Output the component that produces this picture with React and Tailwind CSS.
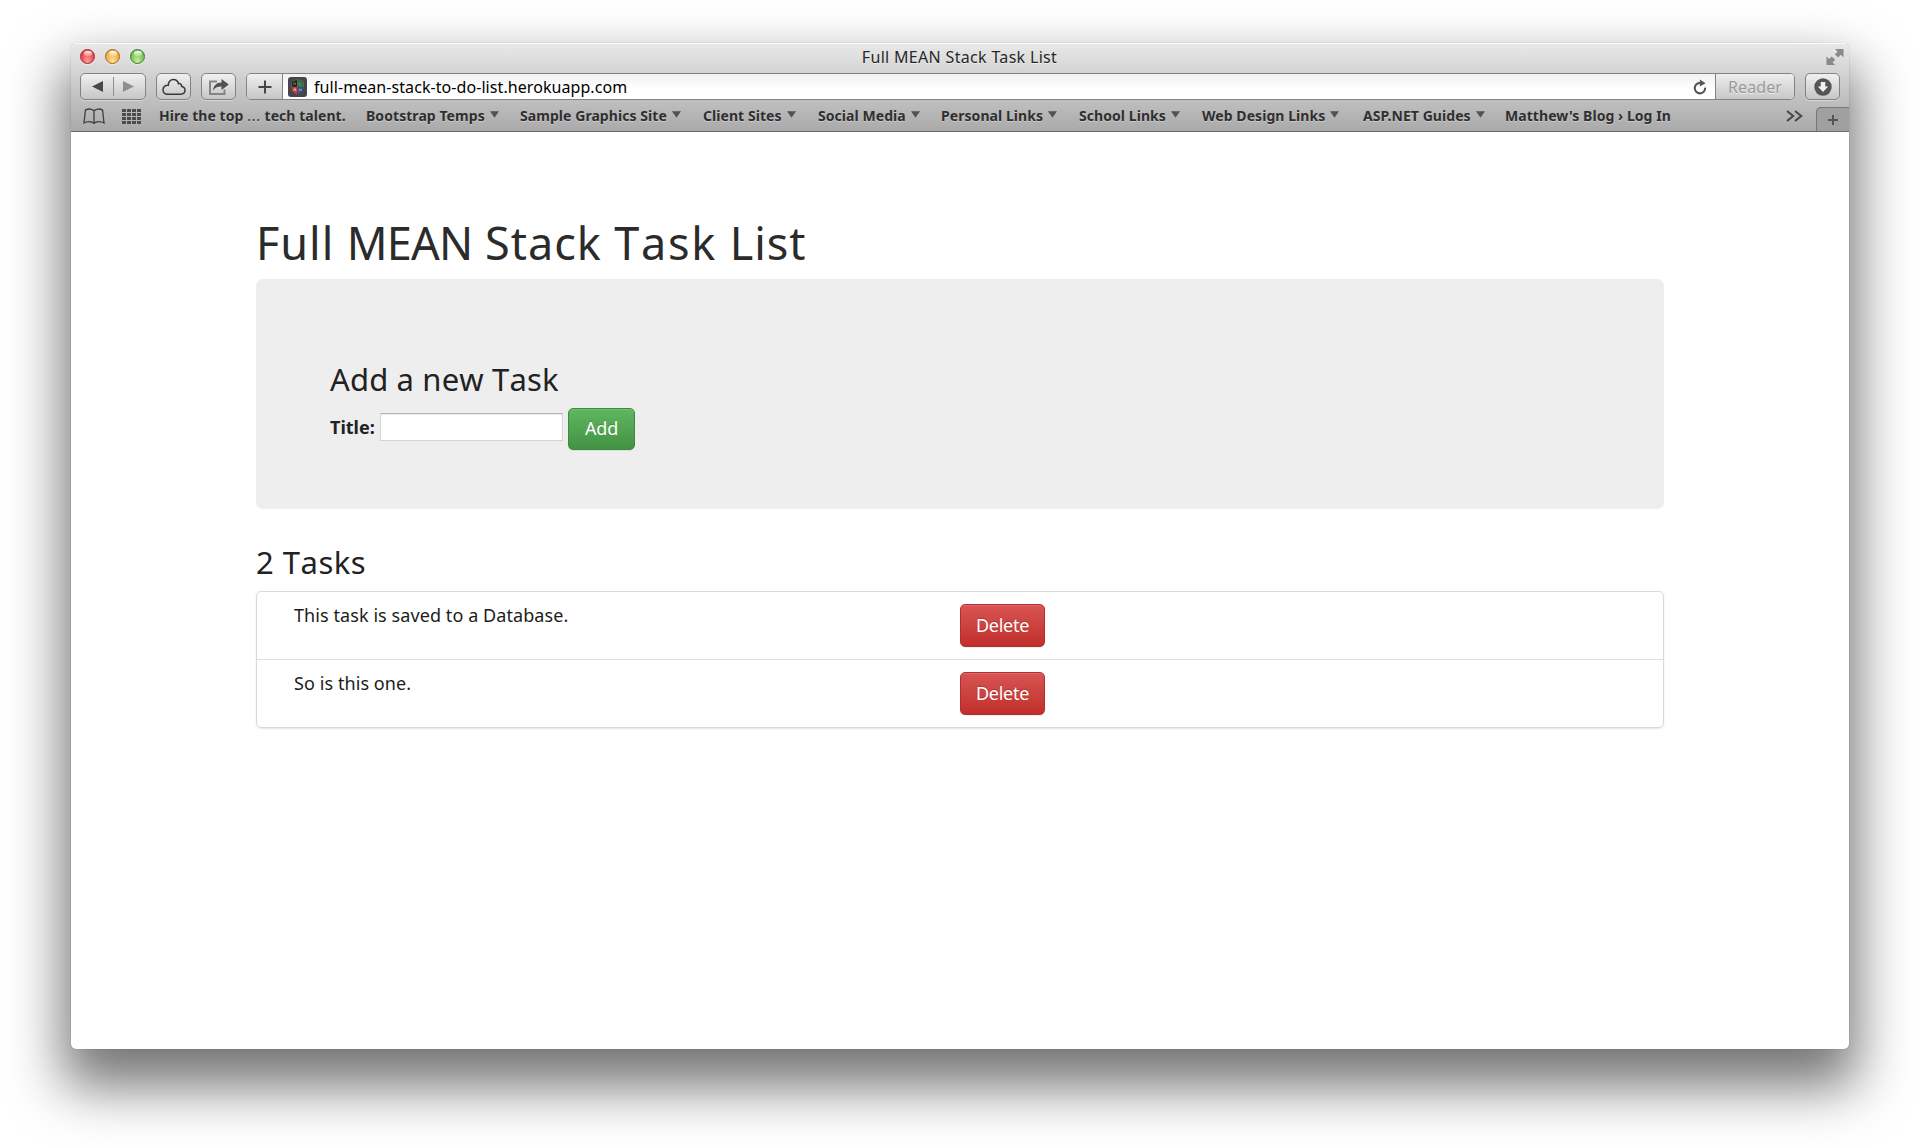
import React from "react";

const BOOKMARKS = [
  { label: "Bootstrap Temps", box: "w-[154px]", menu: true },
  { label: "Sample Graphics Site", box: "w-[183px]", menu: true },
  { label: "Client Sites", box: "w-[115px]", menu: true },
  { label: "Social Media", box: "w-[123px]", menu: true },
  { label: "Personal Links", box: "w-[138px]", menu: true },
  { label: "School Links", box: "w-[123px]", menu: true },
  { label: "Web Design Links", box: "w-[161px]", menu: true },
  { label: "ASP.NET Guides", box: "w-[142px]", menu: true },
  { label: "Matthew's Blog › Log In", box: "w-[166px]", menu: false },
];

const TASKS = ["This task is saved to a Database.", "So is this one."];

function ToolButton({ className, children }) {
  return (
    <div
      className={
        "flex h-[27px] items-center justify-center rounded-[5px] border border-[#838383] bg-linear-to-b from-[#f0f0f0] to-[#c6c6c6] shadow-[0_1px_0_rgba(255,255,255,0.35)] " +
        className
      }
    >
      {children}
    </div>
  );
}

function Light({ className }) {
  return (
    <div
      className={
        "flex h-[15px] w-[15px] justify-center rounded-full border shadow-[0_1px_0_rgba(255,255,255,0.5)] " +
        className
      }
    >
      <div className="mt-px h-[5px] w-[8px] rounded-full bg-linear-to-b from-white/90 to-white/20" />
    </div>
  );
}

function CloudIcon() {
  return (
    <svg width="24" height="18" viewBox="0 0 24 18" fill="none" stroke="#383838" strokeWidth="1.5">
      <path d="M5.3 16.2 H18.6 C21.3 16.2 23 14.5 23 12.3 C23 10 21.4 8.6 19.6 8.4 C19.9 6.6 18.4 5.2 16.5 5.7 C15.8 3.1 13.9 1.6 11.4 1.6 C8.3 1.6 6.2 4 6.3 7.3 C3.2 7 1 9 1 11.7 C1 14.3 2.8 16.2 5.3 16.2 Z" />
    </svg>
  );
}

function ShareIcon() {
  return (
    <svg width="22" height="18" viewBox="0 0 22 18">
      <path d="M9 3.5 H2 V16 H16.5 V11.5" fill="none" stroke="#858585" strokeWidth="2" />
      <path d="M5 12.5 C5.5 7.5 8.5 4.6 13.5 4.5 V1 L20.8 6.6 L13.5 12 V8.6 C10 8.5 7.5 9.3 5 12.5 Z" fill="#505050" />
    </svg>
  );
}

function SiteIcon() {
  return (
    <svg width="19" height="20" viewBox="0 0 19 20">
      <rect width="19" height="20" rx="3" fill="#46464a" />
      <path d="M9.5 2.5 L3.5 4.4 V10 H9.5 Z" fill="#1c1c1c" stroke="#70706f" strokeWidth="0.6" />
      <path d="M9.5 2.5 L15.5 4.4 V10 H9.5 Z" fill="#2f6d3d" stroke="#70706f" strokeWidth="0.6" />
      <path d="M3.5 10 H9.5 V18 C5.5 16 3.7 14 3.5 10 Z" fill="#c63a35" />
      <path d="M15.5 10 H9.5 V18 C13.5 16 15.3 14 15.5 10 Z" fill="#33507e" />
      <path d="M5.2 8 L6.5 5.2 L7.8 8 M11.2 5.2 V8 H13.6 M11.2 6.6 H13.2" fill="none" stroke="#55a05e" strokeWidth="0.9" />
      <path d="M5.5 14 L6.8 11.4 L8.2 14" fill="none" stroke="#f0c4c0" strokeWidth="0.9" />
      <path d="M11.3 14.2 V11.8 L13.3 14 V11.6" fill="none" stroke="#7da4d0" strokeWidth="0.9" />
    </svg>
  );
}

function BookIcon() {
  return (
    <svg width="22" height="17" viewBox="0 0 22 17" fill="none" stroke="#3e3e3e" strokeWidth="1.3">
      <path d="M11 2.8 C8.8 0.6 5 0.5 2.4 2.1 L1 15 C4.2 13 8.5 13 11 15.4 C13.5 13 17.8 13 21 15 L19.6 2.1 C17 0.5 13.2 0.6 11 2.8 Z M11 2.8 V15" />
    </svg>
  );
}

function GridIcon() {
  return (
    <div className="grid grid-cols-4 gap-x-px gap-y-px">
      {Array.from({ length: 16 }, (_, i) => (
        <div key={i} className="h-[3px] w-[4px] bg-[#4c4c4c]" />
      ))}
    </div>
  );
}

function Titlebar() {
  return (
    <div className="grid h-[30px] grid-cols-[1fr_auto_1fr] items-start pl-[9px] pr-[5px]">
      <div className="flex gap-[10px] pt-[6px]">
        <Light className="border-[#a3282c] bg-radial-[at_50%_85%] from-[#ff9c98] to-[#d9272f]" />
        <Light className="border-[#a8651f] bg-radial-[at_50%_85%] from-[#ffe38f] to-[#e8952a]" />
        <Light className="border-[#3f7f2c] bg-radial-[at_50%_85%] from-[#c4f09a] to-[#58a93c]" />
      </div>
      <div className="-ml-[5px] text-[16px] leading-[29px] tracking-[0.32px] text-[#272727] [text-shadow:0_1px_0_rgba(255,255,255,0.5)]">
        Full MEAN Stack Task List
      </div>
      <div className="flex justify-end pt-[5px]">
        <svg width="18" height="18" viewBox="0 0 19 19" fill="#8a8a8a">
          <path d="M9.5 1 H18.5 V10 L15.6 7.1 L12.8 9.9 L9.3 6.6 L12.2 3.9 Z" />
          <path d="M0.5 9 L3.3 11.6 L6 9 L9.7 12.4 L6.9 15.2 L9.7 18 H0.5 Z" />
        </svg>
      </div>
    </div>
  );
}

function Toolbar() {
  return (
    <div className="flex h-[27px] px-[9px]">
      <ToolButton className="w-[66px]">
        <svg width="64" height="25" viewBox="0 0 64 25">
          <path d="M22 7 V18 L11 12.5 Z" fill="#484848" />
          <path d="M32.5 3 V22" stroke="#8f8f8f" />
          <path d="M42 7 V18 L53 12.5 Z" fill="#8f8f8f" />
        </svg>
      </ToolButton>
      <ToolButton className="ml-[10px] w-[35px]">
        <CloudIcon />
      </ToolButton>
      <ToolButton className="ml-[10px] w-[35px]">
        <ShareIcon />
      </ToolButton>
      <div className="ml-[10px] flex h-[27px] flex-1 overflow-hidden rounded-[5px] border border-[#838383] bg-linear-to-b from-[#f1f1f1] to-white to-60%">
        <div className="flex w-[36px] items-center justify-center border-r border-[#838383] bg-linear-to-b from-[#f0f0f0] to-[#c6c6c6]">
          <svg width="14" height="14" viewBox="0 0 14 14" stroke="#454545" strokeWidth="2">
            <path d="M7 0.5 V13.5 M0.5 7 H13.5" />
          </svg>
        </div>
        <div className="flex items-center pl-[5px]">
          <SiteIcon />
        </div>
        <div className="pl-[7px] text-[16px] leading-[27px] tracking-[0.07px] text-black">
          full-mean-stack-to-do-list.herokuapp.com
        </div>
        <div className="ml-auto flex items-center pr-[8px]">
          <svg width="14" height="16" viewBox="0 0 14 16">
            <path d="M12.1 8.6 A5.2 5.2 0 1 1 7.6 4" fill="none" stroke="#555" strokeWidth="2.1" />
            <path d="M6.8 0.6 L12.6 4.2 L6.8 7.6 Z" fill="#555" />
          </svg>
        </div>
        <div className="w-[79px] border-l border-[#838383] bg-linear-to-b from-[#eeeeee] to-[#c8c8c8] text-center text-[16px] leading-[27px] tracking-[0.1px] text-[#9a9a9a] [text-shadow:0_1px_0_rgba(255,255,255,0.6)]">
          Reader
        </div>
      </div>
      <ToolButton className="ml-[10px] w-[35px]">
        <svg width="18" height="18" viewBox="0 0 18 18">
          <circle cx="9" cy="9" r="8.7" fill="#555" />
          <path d="M6.7 4 H11.3 V8.6 H14.2 L9 14 L3.8 8.6 H6.7 Z" fill="#f2f2f2" />
        </svg>
      </ToolButton>
    </div>
  );
}

function BookmarkText({ children }) {
  return (
    <span className="whitespace-nowrap text-[14px] font-bold leading-[31px] tracking-[0.06px] text-[#2f2f2f] [text-shadow:0_1px_0_rgba(255,255,255,0.35)]">
      {children}
    </span>
  );
}

function BookmarksBar() {
  return (
    <div className="flex h-[32px] items-stretch border-b border-[#6a6a6a] pl-[12px]">
      <div className="flex w-[39px] items-center pt-px">
        <BookIcon />
      </div>
      <div className="flex w-[37px] items-center pt-px">
        <GridIcon />
      </div>
      <div className="flex w-[207px] shrink-0 items-center">
        <BookmarkText>
          Hire the top <span className="font-normal tracking-[0.8px]">...</span> tech talent.
        </BookmarkText>
      </div>
      {BOOKMARKS.map((b) => (
        <div key={b.label} className={"flex shrink-0 items-center " + b.box}>
          <BookmarkText>{b.label}</BookmarkText>
          {b.menu && (
            <svg width="9" height="7" viewBox="0 0 9 7" className="mb-[2px] ml-[5px] shrink-0">
              <path d="M0 0.3 H9 L4.5 6.8 Z" fill="#525252" />
            </svg>
          )}
        </div>
      ))}
      <div className="ml-auto flex items-center pr-[13px] pt-px">
        <svg width="17" height="12" viewBox="0 0 17 12" fill="none" stroke="#484848" strokeWidth="2.1">
          <path d="M1 1 L7.2 6 L1 11 M9 1 L15.2 6 L9 11" />
        </svg>
      </div>
      <div className="mt-[7px] flex w-[33px] items-center justify-center rounded-tl-[5px] border-t border-l border-[#777] bg-[#a0a0a0]">
        <svg width="10" height="10" viewBox="0 0 10 10" stroke="#555" strokeWidth="2">
          <path d="M5 0 V10 M0 5 H10" />
        </svg>
      </div>
    </div>
  );
}

function DeleteButton() {
  return (
    <button className="h-[43px] w-[85px] rounded-[5px] border border-[#b52b2f] bg-linear-to-b from-[#d75452] to-[#c12e2a] text-[18px] leading-[41px] tracking-[-0.25px] text-white shadow-[inset_0_1px_0_rgba(255,255,255,0.15),0_1px_1px_rgba(0,0,0,0.075)] [text-shadow:0_-1px_0_rgba(0,0,0,0.2)]">
      Delete
    </button>
  );
}

export default function App() {
  return (
    <div className="h-[1147px] w-[1920px] overflow-hidden bg-white pl-[71px] pt-[43px] font-['Noto_Sans','Open_Sans',sans-serif] text-[#222]">
      <div className="h-[1006px] w-[1778px] overflow-hidden rounded-[5px] bg-white shadow-[0_30px_54px_8px_rgba(0,0,0,0.54),0_0_1px_rgba(0,0,0,0.45)]">
        <header className="bg-linear-to-b from-[#e9e9e9] to-[#a9a9a9] shadow-[inset_0_1px_0_#fbfbfb]">
          <Titlebar />
          <Toolbar />
          <BookmarksBar />
        </header>
        <main className="ml-[185px] w-[1408px] pt-[86px]">
          <h1 className="text-[45px] leading-[50px] tracking-[0.95px] text-[#2b2b2b]">
            Full <span className="tracking-[-0.8px]">MEAN</span> Stack{" "}
            <span className="tracking-[1.7px] [font-kerning:none]">Task</span> List
          </h1>
          <section className="mt-[11px] h-[230px] rounded-[7px] bg-[#eeeeee] pl-[74px] pt-[83px]">
            <h3 className="text-[31px] leading-[34px] tracking-[0.15px] [font-kerning:none]">Add a new Task</h3>
            <form className="mt-[12px] flex h-[42px]">
              <label className="w-[50px] text-[18px] font-bold leading-[38px]">Title:</label>
              <input
                type="text"
                className="mt-[5px] h-[28px] w-[183px] border border-t-[#b5b5b5] border-r-[#d4d4d4] border-b-[#d4d4d4] border-l-[#d4d4d4] bg-white shadow-[inset_0_1px_1px_rgba(0,0,0,0.08)]"
              />
              <button
                type="button"
                className="ml-[5px] flex h-[42px] w-[67px] justify-center rounded-[5px] border border-[#3b8a3e] bg-linear-to-b from-[#60b660] to-[#429343] text-[18px] leading-[38px] tracking-[-0.15px] text-white shadow-[inset_0_1px_0_rgba(255,255,255,0.15),0_1px_1px_rgba(0,0,0,0.075)] [text-shadow:0_-1px_0_rgba(0,0,0,0.2)]"
              >
                Add
              </button>
            </form>
          </section>
          <h3 className="mt-[36px] text-[31px] leading-[34px] tracking-[0.5px] [font-kerning:none]">2 Tasks</h3>
          <ul className="mt-[12px] divide-y divide-[#dddddd] rounded-[5px] border border-[#d9d9d9] shadow-[0_1px_2px_rgba(0,0,0,0.1)]">
            {TASKS.map((task) => (
              <li key={task} className="grid h-[68px] grid-cols-[703px_1fr] items-start pt-[12px] last:h-[67px]">
                <span className="pl-[37px] text-[18px] leading-[22px] tracking-[0.08px] text-[#1c1c1c]">{task}</span>
                <DeleteButton />
              </li>
            ))}
          </ul>
        </main>
      </div>
    </div>
  );
}
